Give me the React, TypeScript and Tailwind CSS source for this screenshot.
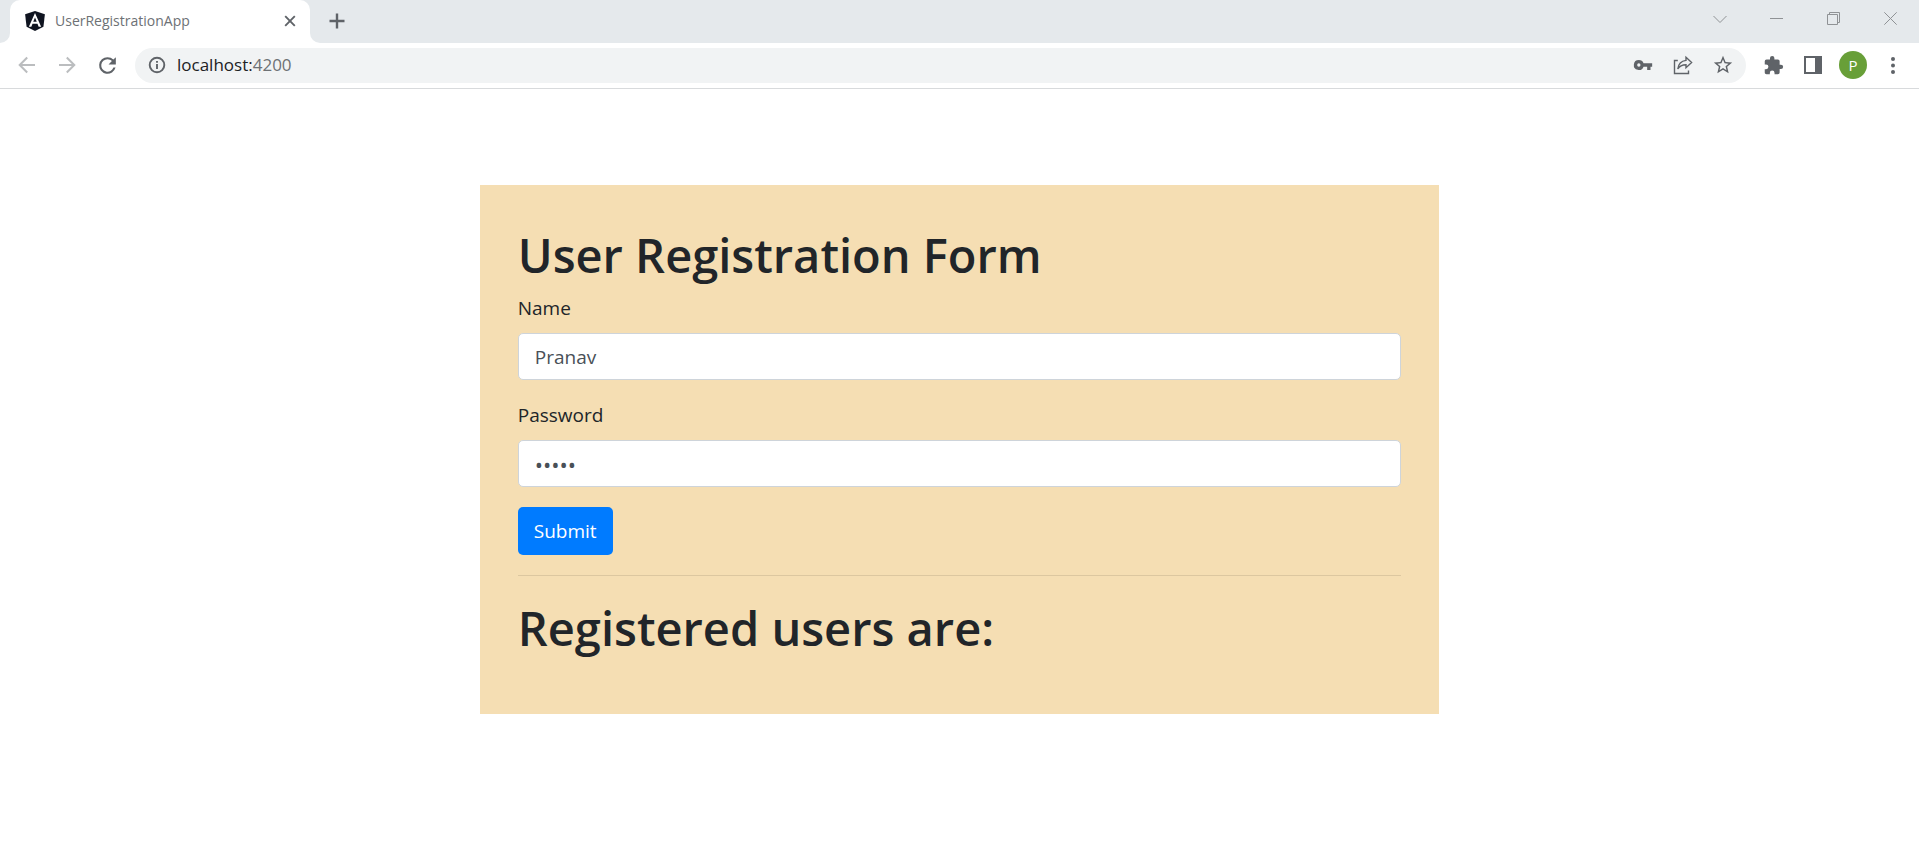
import { useState } from "react";

const icon = "shrink-0 text-[#5f6368]";

function AngularLogo() {
  return (
    <svg className="shrink-0" width="22" height="22" viewBox="0 0 24 24" aria-hidden="true">
      <path fill="#0f1420" d="M12 1 22.8 4.7 21.2 18.3 12 23 2.800 18.3 1.200 4.700z" />
      <path fill="#fff" d="M12 3.200 5.300 18.300h2.700l1.300-3.300h5.400l1.300 3.300h2.700zm1.900 9.600h-3.800L12 8.200z" />
    </svg>
  );
}

function TabStrip() {
  return (
    <header className="flex h-[43px] items-start bg-[#e5e9ec]">
      <div className="h-[43px] w-[10px] shrink-0 bg-white">
        <div className="h-full rounded-br-[10px] bg-[#e5e9ec]" />
      </div>
      <div className="flex h-[43px] w-[300px] shrink-0 items-center rounded-t-[10px] bg-white pr-[10px] pb-[2px] pl-[14px]">
        <AngularLogo />
        <span className="ml-[9px] flex-1 text-sm text-[#6d7175]">UserRegistrationApp</span>
        <button type="button" aria-label="Close tab" className="flex size-[20px] items-center justify-center">
          <svg className={icon} width="12" height="12" viewBox="0 0 12 12" fill="none" stroke="currentColor" strokeWidth="1.9">
            <path d="m1.2 1.2 9.6 9.6M10.8 1.2l-9.6 9.6" />
          </svg>
        </button>
      </div>
      <div className="h-[43px] w-[10px] shrink-0 bg-white">
        <div className="h-full rounded-bl-[10px] bg-[#e5e9ec]" />
      </div>
      <button type="button" aria-label="New tab" className="ml-[7px] flex h-[42px] w-[20px] items-center justify-center">
        <svg className={icon} width="16" height="16" viewBox="0 0 16 16" fill="none" stroke="currentColor" strokeWidth="2.400">
          <path d="M8 .5v15M.5 8h15" />
        </svg>
      </button>
      <div className="ml-auto flex h-[37px] items-center text-[#8f9295]">
        <button type="button" aria-label="Search tabs" className="flex w-[57px] items-center justify-center">
          <svg width="14" height="14" viewBox="0 0 14 14" fill="none" stroke="currentColor"><path d="m.5 4 6.5 6.500L13.500 4" /></svg>
        </button>
        <button type="button" aria-label="Minimize" className="flex w-[57px] items-center justify-center">
          <svg width="13" height="13" viewBox="0 0 13 13" fill="none" stroke="currentColor"><path d="M0 6.500h13" /></svg>
        </button>
        <button type="button" aria-label="Restore" className="flex w-[57px] items-center justify-center">
          <svg width="13" height="13" viewBox="0 0 13 13" fill="none" stroke="currentColor"><path d="M.5 2.500h10v10h-10zM2.500 2.500v-2h10v10h-2" /></svg>
        </button>
        <button type="button" aria-label="Close window" className="flex w-[57px] items-center justify-center">
          <svg width="13" height="13" viewBox="0 0 13 13" fill="none" stroke="currentColor"><path d="m.3.3 12.400 12.400M12.700.3.3 12.700" /></svg>
        </button>
      </div>
    </header>
  );
}

function Toolbar() {
  return (
    <nav className="flex h-[46px] items-center border-b border-[#d8dadc] bg-white pr-[16px] pb-px pl-[17px]">
      <button type="button" aria-label="Back" className="flex w-[20px] justify-center text-[#bbbdbf]">
        <svg width="18" height="18" viewBox="0 0 18 18" fill="none" stroke="currentColor" strokeWidth="2"><path d="M17 9H2M9.200 1.500 1.700 9l7.500 7.500" /></svg>
      </button>
      <button type="button" aria-label="Forward" className="ml-[20px] flex w-[20px] justify-center text-[#bbbdbf]">
        <svg width="18" height="18" viewBox="0 0 18 18" fill="none" stroke="currentColor" strokeWidth="2"><path d="M1 9h15M8.800 1.500 16.300 9l-7.500 7.500" /></svg>
      </button>
      <button type="button" aria-label="Reload" className="ml-[20px] flex w-[20px] justify-center">
        <svg className={icon} width="25" height="25" viewBox="0 0 24 24" fill="currentColor"><path d="M17.650 6.350A7.960 7.960 0 0 0 12 4a8 8 0 1 0 7.730 10h-2.080A6 6 0 1 1 12 6c1.660 0 3.140.69 4.220 1.780L13 11h7V4z" /></svg>
      </button>
      <div className="ml-[18px] flex h-[35px] min-w-0 flex-1 items-center rounded-full bg-[#f1f3f4] pr-[13px] pl-[13px]">
        <svg className={icon} width="18" height="18" viewBox="0 0 18 18" fill="none" stroke="currentColor" strokeWidth="1.900" aria-hidden="true">
          <circle cx="9" cy="9" r="7.300" /><path d="M9 8v5M9 5v1.800" />
        </svg>
        <p className="ml-[11px] flex-1 text-[17px] text-[#202124]">localhost:<span className="text-[#6d7175]">4200</span></p>
        <div className="flex items-center gap-[20px]">
          <button type="button" aria-label="Passwords" className="flex size-[20px] items-center justify-center">
            <svg className={icon} width="20" height="20" viewBox="0 0 24 24" fill="currentColor"><path d="M12.650 10A5.990 5.990 0 0 0 7 6a6 6 0 1 0 5.650 8H17v4h4v-4h2v-4zM7 14a2 2 0 1 1 0-4 2 2 0 0 1 0 4z" /></svg>
          </button>
          <button type="button" aria-label="Share" className="flex size-[20px] items-center justify-center">
            <svg className={icon} width="20" height="20" viewBox="0 0 20 20" fill="none" stroke="currentColor" strokeWidth="1.400"><path d="M4.800 5.500H1.500v13h14v-3M13 2.300l5.600 5.200-5.600 5.200V9.700c-3.600 0-6.500 1.300-8.200 4.300.5-4.300 3-8 8.200-8.600z" /></svg>
          </button>
          <button type="button" aria-label="Bookmark" className="flex size-[20px] items-center justify-center">
            <svg className={icon} width="22" height="22" viewBox="0 0 24 24" fill="currentColor"><path d="m22 9.240-7.190-.62L12 2 9.190 8.630 2 9.240l5.460 4.730L5.820 21 12 17.270 18.180 21l-1.630-7.030zM12 15.400l-3.760 2.270 1-4.280-3.320-2.880 4.380-.38L12 6.100l1.710 4.040 4.380.38-3.320 2.880 1 4.280z" /></svg>
          </button>
        </div>
      </div>
      <div className="ml-[17px] flex items-center gap-[16px]">
        <button type="button" aria-label="Extensions" className="flex w-[20px] justify-center">
          <svg className={icon} width="21" height="21" viewBox="0 0 24 24" fill="currentColor"><path d="M20.500 11H19V7a2 2 0 0 0-2-2h-4V3.500a2.500 2.500 0 0 0-5 0V5H4a2 2 0 0 0-2 2v3.800h1.500a2.700 2.700 0 0 1 0 5.400H2V20c0 1.100.9 2 2 2h3.800v-1.500a2.700 2.700 0 0 1 5.400 0V22H17a2 2 0 0 0 2-2v-4h1.500a2.500 2.500 0 0 0 0-5z" /></svg>
        </button>
        <button type="button" aria-label="Side panel" className="ml-[4px] flex w-[20px] justify-center">
          <svg className={icon} width="18" height="18" viewBox="0 0 18 18" fill="currentColor"><path fillRule="evenodd" d="M0 0h18v18H0zM2 2v14h9V2z" /></svg>
        </button>
        <button type="button" aria-label="Profile" className="flex size-[28px] items-center justify-center rounded-full bg-[#689f38] text-[15px] text-white">P</button>
        <button type="button" aria-label="Menu" className="flex w-[20px] justify-center">
          <svg className={icon} width="4" height="17" viewBox="0 0 4 17" fill="currentColor"><circle cx="2" cy="2" r="2" /><circle cx="2" cy="8.500" r="2" /><circle cx="2" cy="15" r="2" /></svg>
        </button>
      </div>
    </nav>
  );
}

const field = "mt-[10px] block h-[47px] w-full rounded-[5px] border border-[#ced4da] bg-white px-[16px] text-[#495057] outline-none";
const heading = "text-[47px] leading-[60px] font-semibold";

function RegistrationForm() {
  const [name, setName] = useState("Pranav");
  const [password, setPassword] = useState("admin");
  return (
    <main className="mx-auto mt-[96px] w-1/2 bg-[#f5deb3] px-[38px] pt-[40px] pb-[56px] text-[19px] leading-[30px] text-[#212529]">
      <h1 className={heading}>User Registration Form</h1>
      <form className="mt-[8px]" onSubmit={(e) => e.preventDefault()}>
        <label htmlFor="name" className="block">Name</label>
        <input id="name" type="text" className={`${field} text-[19px]`} value={name} onChange={(e) => setName(e.target.value)} />
        <label htmlFor="password" className="mt-[20px] block">Password</label>
        <input id="password" type="password" className={`${field} text-[22px]`} value={password} onChange={(e) => setPassword(e.target.value)} />
        <button type="submit" className="mt-[20px] h-[48px] rounded-[5px] bg-[#007bff] px-[16px] text-white">Submit</button>
      </form>
      <hr className="mt-[20px] mb-[22px] border-black/10" />
      <h1 className={heading}>Registered users are:</h1>
    </main>
  );
}

export default function App() {
  return (
    <div className="min-h-screen bg-white font-['Open_Sans','Noto_Sans',sans-serif]">
      <TabStrip />
      <Toolbar />
      <RegistrationForm />
    </div>
  );
}
